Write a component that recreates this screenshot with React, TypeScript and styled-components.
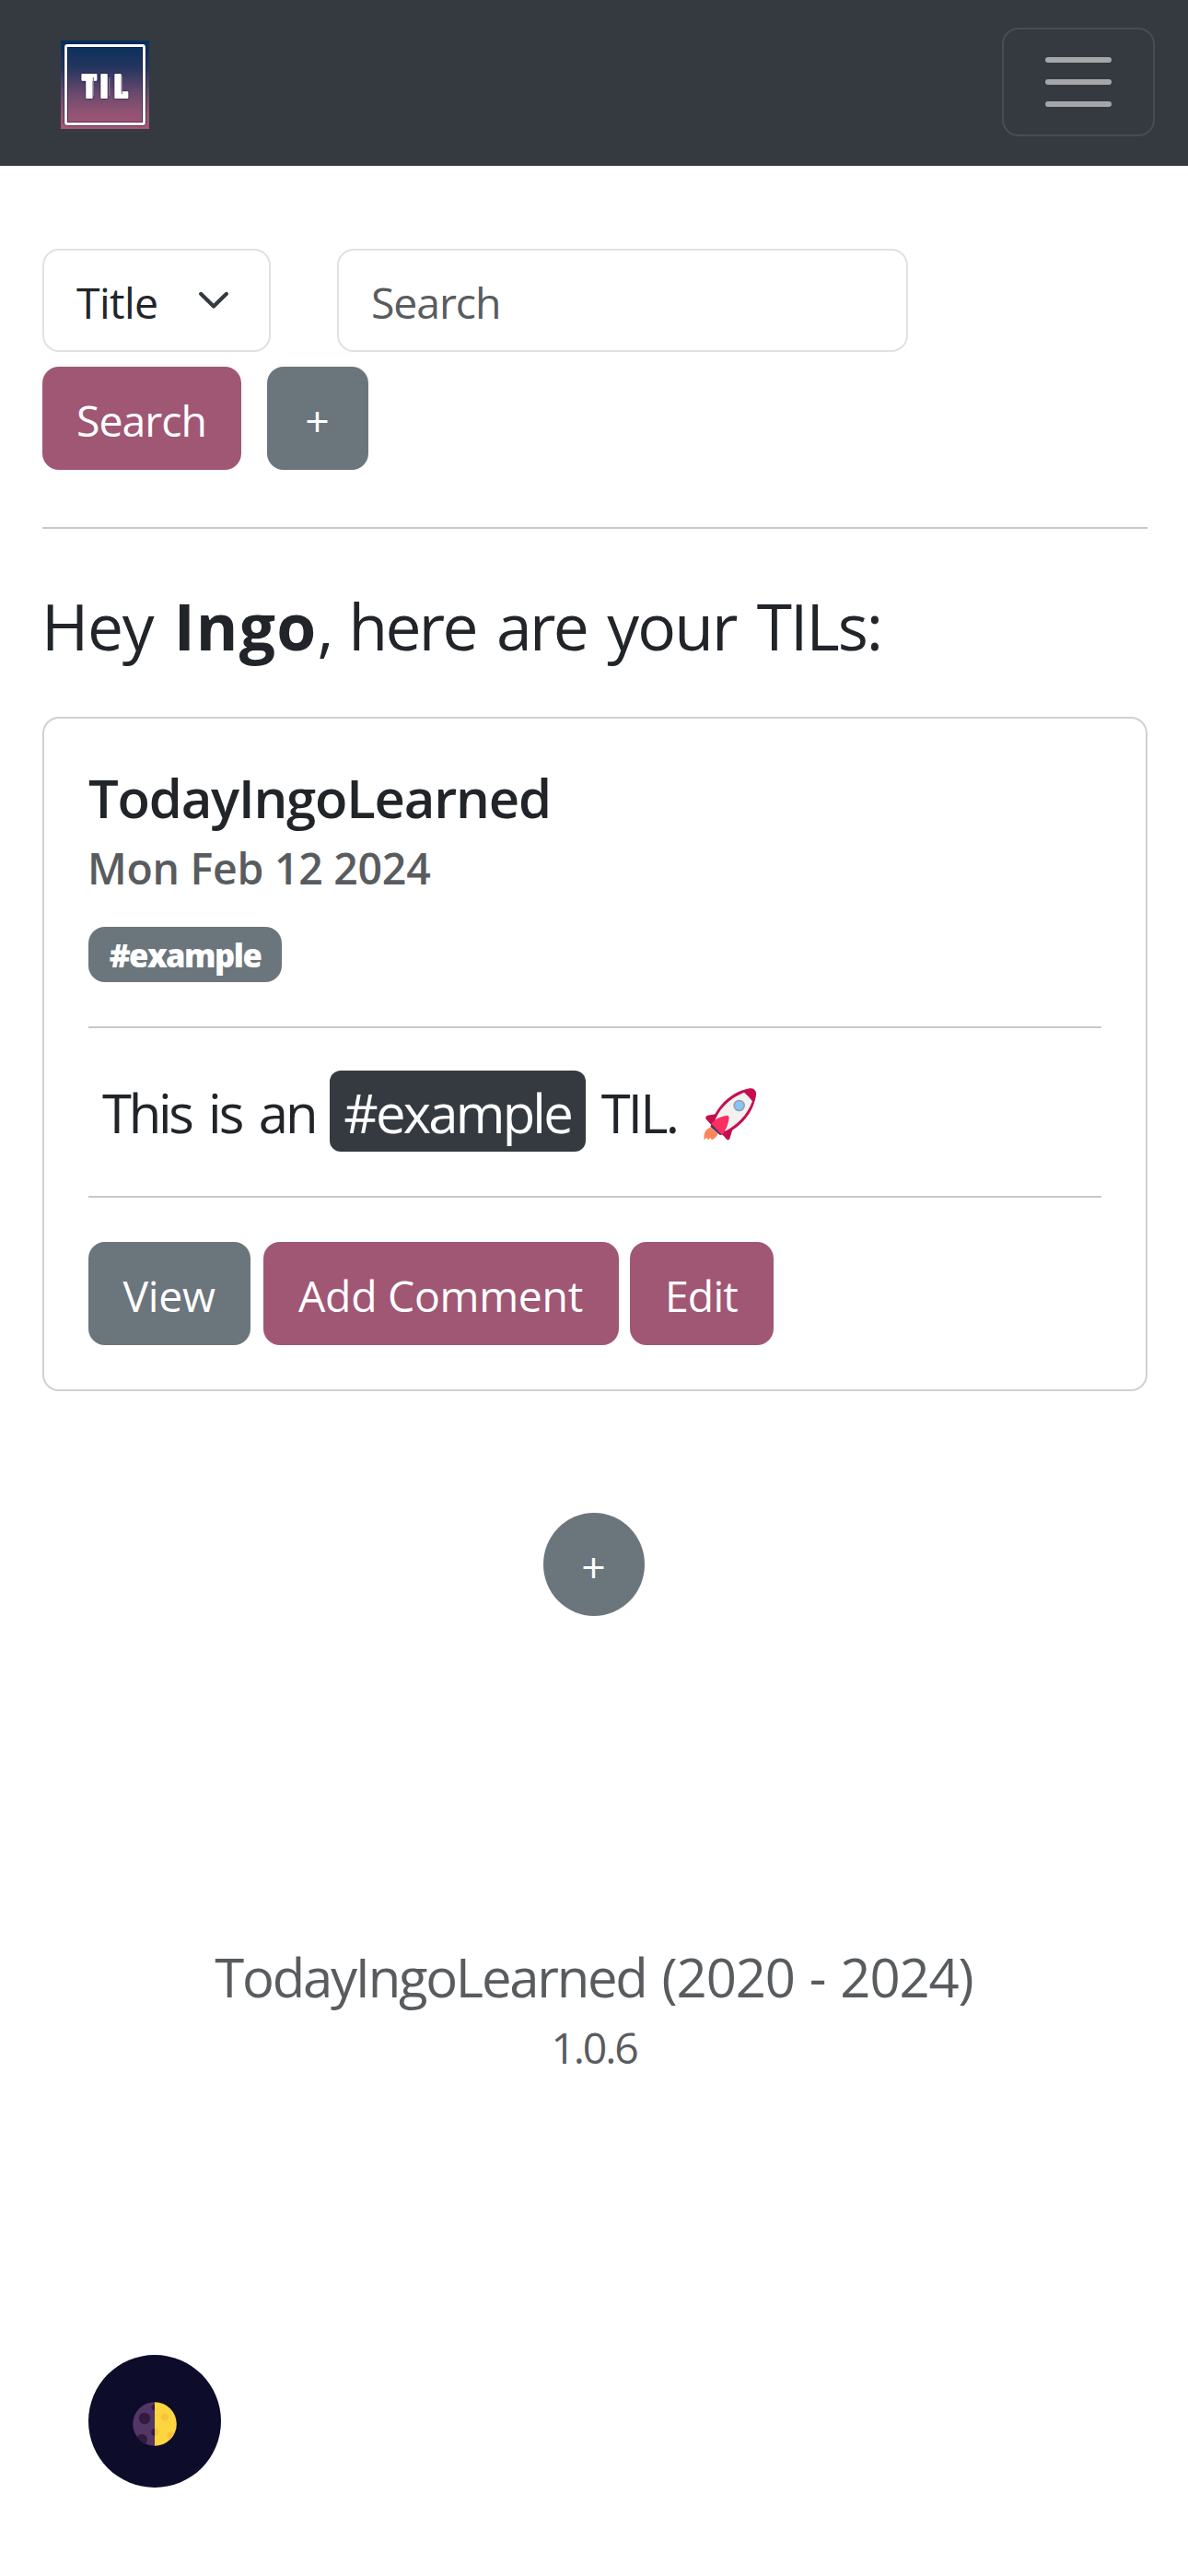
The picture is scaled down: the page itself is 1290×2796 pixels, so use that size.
import React from "react";
import styled, { createGlobalStyle } from "styled-components";

const GlobalStyle = createGlobalStyle`
  *, *::before, *::after { box-sizing: border-box; }
  body {
    margin: 0;
    background: #fff;
    color: #212529;
    font-family: "Open Sans", "Noto Sans", sans-serif;
    font-size: 46.4px;
  }
`;

const Page = styled.div`
  display: flex;
  flex-direction: column;
  width: 1290px;
  min-height: 2796px;
`;

const Navbar = styled.header`
  display: flex;
  justify-content: space-between;
  align-items: flex-start;
  height: 180px;
  padding: 30px 36px 0 66px;
  background: #343a40;
`;

const Logo = styled.svg`
  display: block;
  width: 96px;
  height: 96px;
  margin-top: 14px;
`;

const Toggler = styled.button`
  display: flex;
  flex-direction: column;
  align-items: center;
  gap: 18px;
  width: 166px;
  height: 118px;
  padding: 30px 0 0;
  border: 2px solid #484d52;
  border-radius: 18px;
  background: transparent;
`;

const TogglerBar = styled.span`
  width: 72px;
  height: 6px;
  border-radius: 3px;
  background: #a4a6a9;
`;

const Main = styled.main`
  display: flex;
  flex-direction: column;
  padding: 90px 44px 0 46px;
`;

const SearchForm = styled.div`
  display: flex;
  flex-direction: column;
  gap: 16px;
`;

const Fields = styled.div`
  display: flex;
  gap: 72px;
`;

const Select = styled.div`
  display: flex;
  align-items: center;
  justify-content: space-between;
  width: 248px;
  height: 112px;
  padding: 4px 44px 0 35px;
  border: 2px solid #dee2e6;
  border-radius: 18px;
  letter-spacing: -0.6px;
`;

const Chevron = styled.svg`
  width: 32px;
  height: 20px;
  margin-bottom: 4px;
`;

const SearchInput = styled.input`
  width: 620px;
  height: 112px;
  padding: 4px 36px 0 35px;
  border: 2px solid #dee2e6;
  border-radius: 18px;
  outline: none;
  background: #fff;
  font: inherit;
  letter-spacing: -1.1px;
  &::placeholder { color: #595c5f; opacity: 1; }
`;

const ButtonRow = styled.div<{ $gap: number }>`
  display: flex;
  gap: ${(p) => p.$gap}px;
`;

const Button = styled.button<{ $width: number; $tone: "primary" | "secondary"; $tracking?: number; $round?: boolean }>`
  display: flex;
  align-items: center;
  justify-content: center;
  width: ${(p) => p.$width}px;
  height: 112px;
  padding: 4px 1px 0 0;
  border: 0;
  border-radius: ${(p) => (p.$round ? "50%" : "18px")};
  background: ${(p) => (p.$tone === "primary" ? "#a05774" : "#6b757c")};
  color: #fff;
  font: inherit;
  letter-spacing: ${(p) => p.$tracking ?? 0}px;
  white-space: nowrap;
`;

const Rule = styled.hr<{ $top: number }>`
  width: 100%;
  height: 2px;
  margin: ${(p) => p.$top}px 0 0;
  border: 0;
  background: #c7c8c9;
`;

const Greeting = styled.h2`
  margin: 62px 0 56px -1px;
  font-size: 69.5px;
  font-weight: 400;
  line-height: 86px;
  word-spacing: 4.1px;
  white-space: nowrap;
`;

const Word = styled.span<{ $tracking: number }>`
  letter-spacing: ${(p) => p.$tracking}px;
`;

const UserName = styled.strong`
  font-weight: 700;
  letter-spacing: 1.2px;
`;

const Card = styled.article`
  display: flex;
  flex-direction: column;
  align-items: flex-start;
  width: 1200px;
  height: 732px;
  padding: 50px 48px 48px;
  border: 2px solid #d0d1d2;
  border-radius: 18px;
`;

const CardTitle = styled.h5`
  margin: 0;
  font-size: 58px;
  font-weight: 600;
  line-height: 72px;
  letter-spacing: -1.2px;
`;

const CardDate = styled.h6`
  margin: 11px 0 0 -1px;
  color: #595c5f;
  font-size: 46.4px;
  font-weight: 600;
  line-height: 58px;
  letter-spacing: -0.25px;
`;

const Badge = styled.span`
  display: flex;
  align-items: center;
  justify-content: center;
  width: 210px;
  height: 60px;
  margin-top: 35px;
  border-radius: 18px;
  background: #6b757c;
  color: #fff;
  font-size: 34.5px;
  font-weight: 800;
  letter-spacing: -1.5px;
`;

const CardText = styled.div`
  display: flex;
  align-items: center;
  height: 88px;
  margin: 46px 0 0 15px;
  font-size: 58px;
  line-height: 85px;
  word-spacing: 3.4px;
  white-space: pre;
`;

const Line = styled.span`
  padding-top: 3px;
`;

const Tag = styled.span`
  display: flex;
  justify-content: center;
  width: 278px;
  height: 88px;
  margin: 0 17px 0 15px;
  padding-top: 3px;
  border-radius: 12px;
  background: #343a40;
  color: #fff;
  letter-spacing: -2.8px;
`;

const Rocket = styled.svg`
  width: 57.3px;
  height: 56.3px;
  margin: 7px 0 0 29px;
`;

const Actions = styled.div`
  display: flex;
  margin-top: 48px;
  gap: 14px;
  & > :last-child { margin-left: -2px; }
`;

const AddRow = styled.div`
  display: flex;
  justify-content: center;
  padding: 132px 2px 0 0;
`;

const Footer = styled.footer`
  display: flex;
  flex-direction: column;
  align-items: center;
  margin-top: 347px;
  color: #595c5f;
`;

const FooterTitle = styled.div`
  font-size: 58px;
  line-height: 90px;
  word-spacing: 2px;
  white-space: nowrap;
`;

const Version = styled.div`
  margin-top: 1px;
  line-height: 60px;
  letter-spacing: -2.2px;
`;

const ThemeToggle = styled.button`
  display: flex;
  align-items: center;
  justify-content: center;
  width: 144px;
  height: 144px;
  margin: 304px 0 0 96px;
  padding: 6px 0 0;
  border: 0;
  border-radius: 50%;
  background: #0d0c2b;
`;

const Moon = styled.svg`
  width: 48px;
  height: 48px;
`;

const LogoText = styled.text`
  font-family: "Open Sans", sans-serif;
  font-size: 34.5px;
  font-weight: 800;
`;

export default function App() {
  return (
    <Page>
      <GlobalStyle />
      <Navbar>
        <Logo viewBox="0 0 96 96">
          <defs>
            <linearGradient id="dusk" x1="0" y1="0" x2="0" y2="1">
              <stop offset="0" stopColor="#02305c" />
              <stop offset="0.3" stopColor="#23355f" />
              <stop offset="0.6" stopColor="#6a4a6d" />
              <stop offset="0.8" stopColor="#8f5273" />
              <stop offset="1" stopColor="#a75674" />
            </linearGradient>
            <filter id="halo" x="-10%" y="-10%" width="120%" height="120%">
              <feDropShadow dx="0" dy="0" stdDeviation="0.9" floodColor="#1d1040" floodOpacity="1" />
            </filter>
          </defs>
          <rect width="96" height="96" fill="url(#dusk)" />
          <rect x="5.5" y="5.5" width="85" height="85" rx="2" fill="none" stroke="#1a1440" strokeOpacity="0.55" strokeWidth="5" />
          <rect x="5.5" y="5.5" width="85" height="85" rx="1.5" fill="none" stroke="#fff" strokeWidth="2.8" />
          <g filter="url(#halo)">
            <LogoText transform="scale(0.8 1)" x="28.6 52.8 71.5" y="61.6" fill="#fff" stroke="#fff" strokeWidth="2.2" strokeLinejoin="round">TIL</LogoText>
          </g>
          <path d="M35.4 40v20M52.6 40v20M66.4 38v20" stroke="#8a7396" strokeWidth="1.2" />
        </Logo>
        <Toggler>
          <TogglerBar />
          <TogglerBar />
          <TogglerBar />
        </Toggler>
      </Navbar>

      <Main>
        <SearchForm>
          <Fields>
            <Select>
              Title
              <Chevron viewBox="0 0 32 20">
                <path d="M2.2 3 L16 16.6 L29.8 3" fill="none" stroke="#343a40" strokeWidth="4.2" strokeLinecap="round" strokeLinejoin="round" />
              </Chevron>
            </Select>
            <SearchInput placeholder="Search" />
          </Fields>
          <ButtonRow $gap={28}>
            <Button $tone="primary" $width={216} $tracking={-1}>Search</Button>
            <Button $tone="secondary" $width={110}>+</Button>
          </ButtonRow>
        </SearchForm>

        <Rule $top={62} />

        <Greeting>
          <Word $tracking={-1.2}>Hey</Word> <UserName>Ingo</UserName>
          <Word $tracking={-6}>,</Word> <Word $tracking={-2.7}>here</Word>{" "}
          <Word $tracking={-2.7}>are</Word> <Word $tracking={-1.8}>your</Word>{" "}
          <Word $tracking={-2}>TILs:</Word>
        </Greeting>

        <Card>
          <CardTitle>TodayIngoLearned</CardTitle>
          <CardDate>Mon Feb 12 2024</CardDate>
          <Badge>#example</Badge>
          <Rule $top={48} />
          <CardText>
            <Line>
              <Word $tracking={-3.3}>This</Word> <Word $tracking={-3}>is</Word>{" "}
              <Word $tracking={-3}>an</Word>
            </Line>
            <Tag>#example</Tag>
            <Line><Word $tracking={-2.8}>TIL.</Word></Line>
            <Rocket viewBox="72 93 172 169">
              <path d="M95 221 C80 224 71 240 74 262 L82 254 L87 262 L94 254 L99 262 C108 258 117 250 119 241 Z" fill="#ff855b" />
              <path d="M114 177 L85 182 C80 183 77 189 80 194 L97 213 Z" fill="#c60e4e" />
              <path d="M169 219 L157 258 C155 263 149 263 146 259 L133 244 Z" fill="#c60e4e" />
              <path d="M97 211 C108 164 154 106 222 94 C235 92 246 102 243 116 C233 184 180 228 134 247 Z" fill="#c60e4e" />
              <path d="M106 207 C119 166 151 128 204 107 Q219 119 231 136 C215 180 182 214 141 234 Z" fill="#f2f2f2" />
              <circle cx="188" cy="150" r="16.5" fill="#83c5ff" stroke="#9a9fa5" strokeWidth="5" />
              <path d="M98 209 L132 244 L126 247 L94 219 Z" fill="#533566" />
              <path d="M98 209 C108 194 127 186 149 182 Q156 183 155 190 C153 210 144 233 132 246 Z" fill="#f92f60" />
            </Rocket>
          </CardText>
          <Rule $top={48} />
          <Actions>
            <Button $tone="secondary" $width={176} $tracking={-0.3}>View</Button>
            <Button $tone="primary" $width={386} $tracking={-0.3}>Add Comment</Button>
            <Button $tone="primary" $width={156} $tracking={-0.8}>Edit</Button>
          </Actions>
        </Card>

        <AddRow>
          <Button $tone="secondary" $width={110} $round>+</Button>
        </AddRow>
      </Main>

      <Footer>
        <FooterTitle>
          <Word $tracking={-2.25}>TodayIngoLearned</Word> <Word $tracking={-1.1}>(2020 - 2024)</Word>
        </FooterTitle>
        <Version>1.0.6</Version>
      </Footer>

      <ThemeToggle>
        <Moon viewBox="0 0 48 48">
          <defs>
            <clipPath id="disc"><circle cx="24" cy="24" r="23.8" /></clipPath>
            <clipPath id="dark"><rect width="24" height="48" /></clipPath>
            <clipPath id="light"><rect x="24" width="24" height="48" /></clipPath>
          </defs>
          <g clipPath="url(#disc)">
            <g clipPath="url(#dark)">
              <rect width="48" height="48" fill="#533566" />
              <g fill="#321b41">
                <circle cx="13" cy="18" r="6.2" />
                <circle cx="23.5" cy="6" r="3" />
                <circle cx="24" cy="33" r="3.8" />
                <circle cx="10" cy="41" r="6" />
              </g>
            </g>
            <g clipPath="url(#light)">
              <rect width="48" height="48" fill="#fcd53f" />
              <g fill="#f9c23c">
                <circle cx="35" cy="16.5" r="4" />
                <circle cx="24" cy="33" r="4.4" />
                <circle cx="42" cy="37" r="4.4" />
              </g>
            </g>
          </g>
        </Moon>
      </ThemeToggle>
    </Page>
  );
}
